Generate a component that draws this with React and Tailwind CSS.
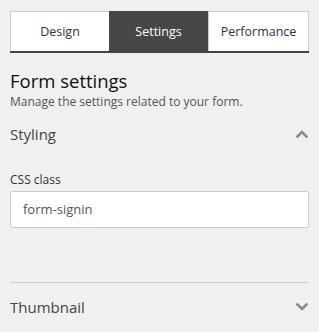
import React from "react";

function Chevron({ up }) {
  return (
    <svg width="12" height="8" viewBox="0 0 12 8" className="block">
      <polyline
        points={up ? "1.5,6.5 6,2 10.5,6.5" : "1.5,1.5 6,6 10.5,1.5"}
        fill="none"
        stroke="#8a8a8a"
        strokeWidth="2.6"
        strokeLinecap="square"
      />
    </svg>
  );
}

export default function App() {
  return (
    <div
      className="w-[319px] h-[332px] bg-[#f0f0f0] px-[10px] pt-[11px] overflow-hidden"
      style={{ fontFamily: '"Open Sans", "Noto Sans", sans-serif' }}
    >
      <div className="flex border-b-2 border-[#444444] h-[42px]">
        <div className="w-[99px] pt-[2px] border-l border-t border-[#cccccc] bg-white flex items-center justify-center text-[12.5px] text-[#333]">
          Design
        </div>
        <div className="w-[99px] pt-[2px] bg-[#464646] flex items-center justify-center text-[12.5px] text-white">
          Settings
        </div>
        <div className="flex-1 pt-[2px] border-l border-t border-r border-[#cccccc] bg-white flex items-center justify-center text-[12.5px] text-[#333]">
          Performance
        </div>
      </div>

      <div className="mt-[15px] text-[18.5px] leading-[26px] text-[#111]">Form settings</div>
      <div className="text-[12px] leading-[16px] text-[#555]">
        Manage the settings related to your form.
      </div>

      <div className="mt-[13px] flex items-center justify-between h-[22px]">
        <span className="text-[15px] text-[#444]">Styling</span>
        <span className="mr-[1px]">
          <Chevron up />
        </span>
      </div>

      <div className="mt-[27px] text-[12px] leading-[16px] text-[#333]">CSS class</div>
      <div className="mt-[3px] h-[37px] bg-white border border-[#cccccc] rounded-[2px] flex items-center pl-[12px] text-[13px] text-[#555]">
        form-signin
      </div>

      <div className="mt-[54px] border-t border-[#cccccc]" />

      <div className="mt-[13px] flex items-center justify-between h-[22px]">
        <span className="text-[15px] text-[#444]">Thumbnail</span>
        <span className="mr-[1px]">
          <Chevron />
        </span>
      </div>
    </div>
  );
}
